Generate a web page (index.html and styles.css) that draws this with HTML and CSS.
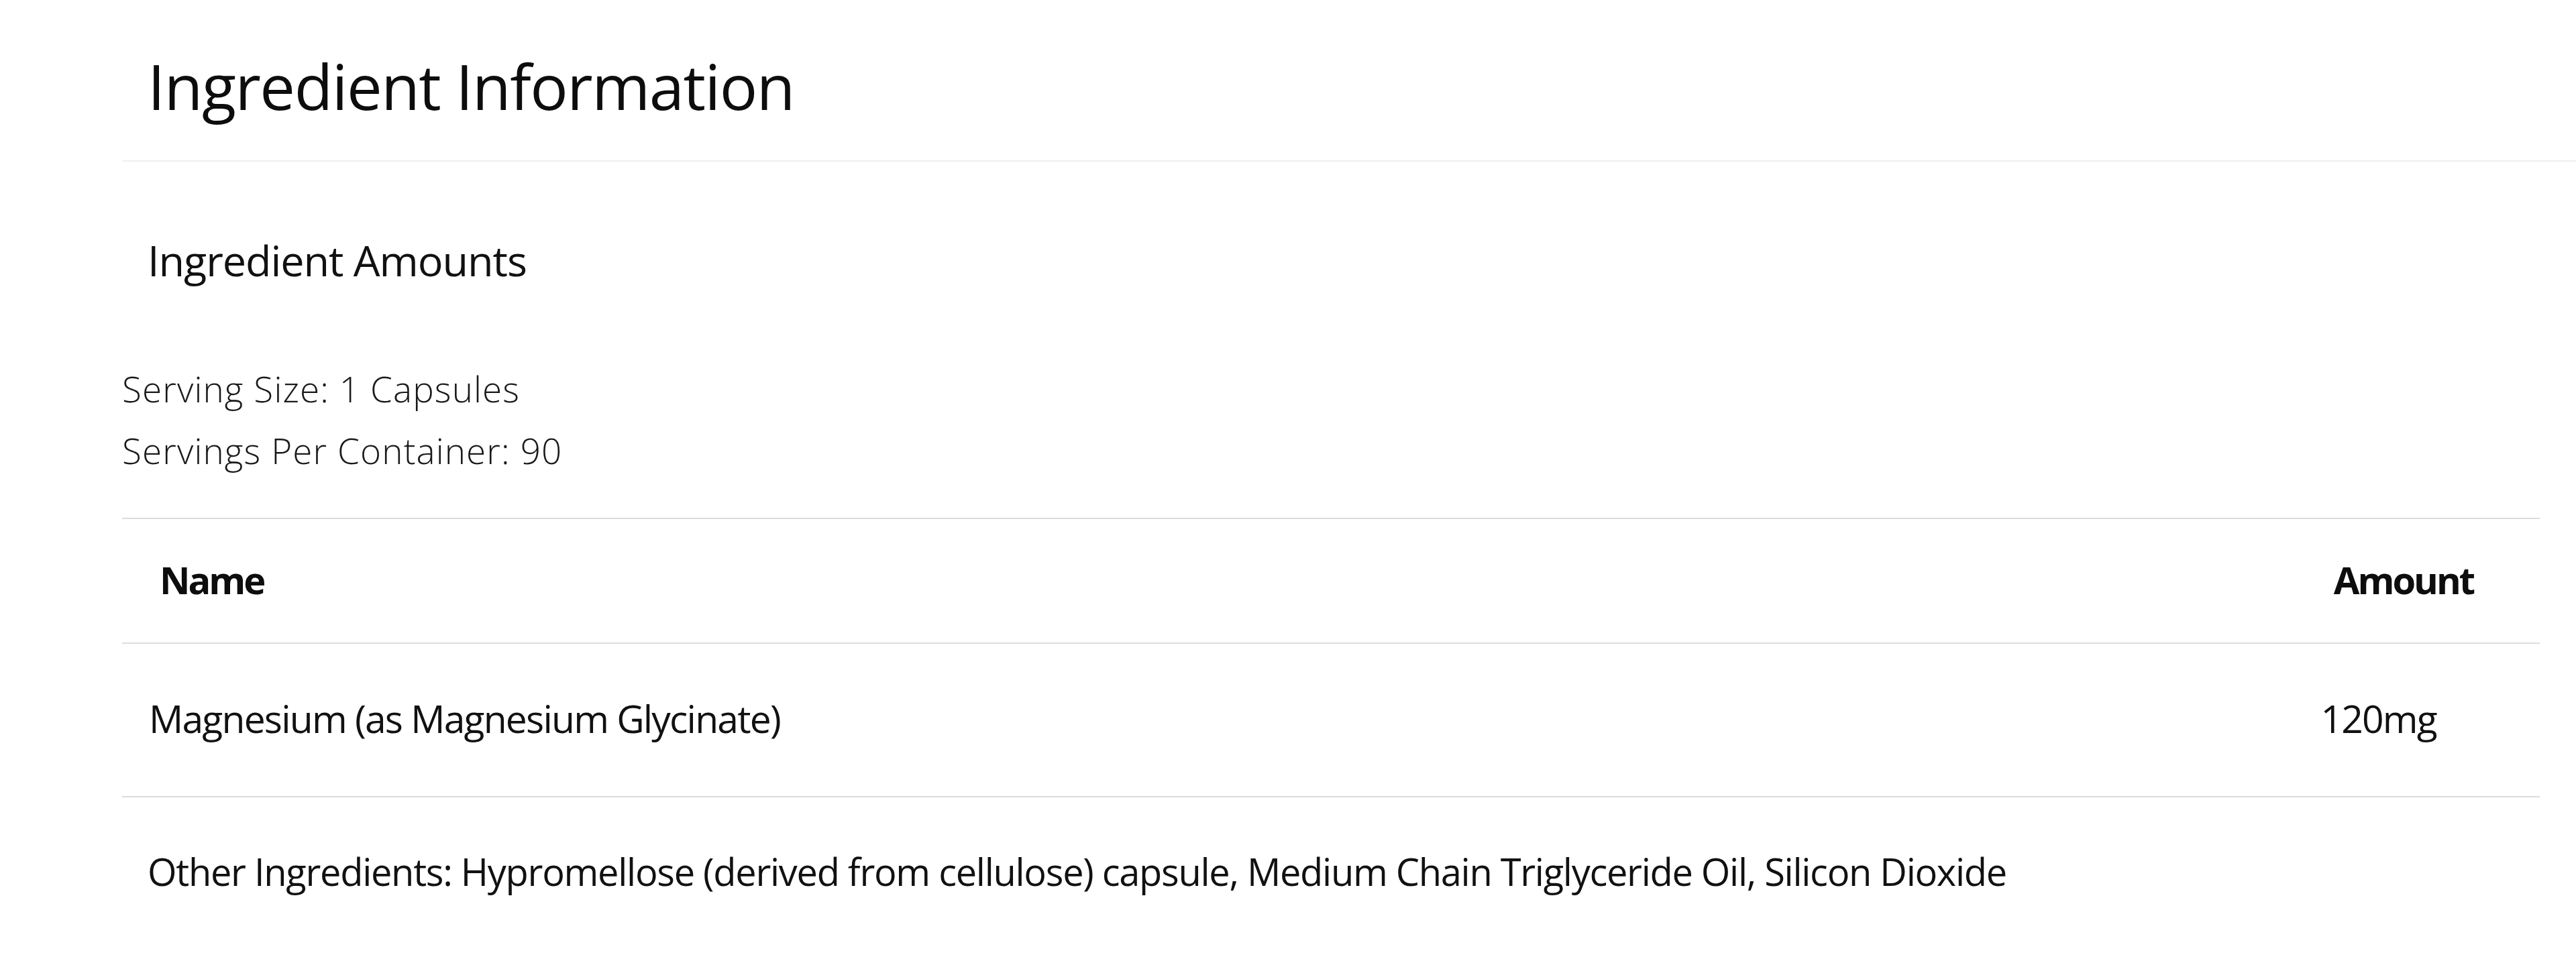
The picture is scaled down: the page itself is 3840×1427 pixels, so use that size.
FILE: index.html
```html
<!DOCTYPE html>
<html lang="en">
<head>
<meta charset="utf-8">
<title>Ingredient Information</title>
<link rel="stylesheet" href="styles.css">
</head>
<body>
<main class="page">
  <header class="title-section">
    <h1 class="title">Ingredient Information</h1>
  </header>
  <section class="amounts">
    <h2 class="subtitle">Ingredient Amounts</h2>
    <div class="serving">
      <p class="serving-line">Serving Size: 1 Capsules</p>
      <p class="serving-line">Servings Per Container: 90</p>
    </div>
    <div class="table">
      <div class="row head-row">
        <span class="cell head-name">Name</span>
        <span class="cell head-amount">Amount</span>
      </div>
      <div class="row body-row">
        <span class="cell body-name">Magnesium (as Magnesium Glycinate)</span>
        <span class="cell body-amount">120mg</span>
      </div>
    </div>
    <p class="other">Other Ingredients: Hypromellose (derived from cellulose) capsule, Medium Chain Triglyceride Oil, Silicon Dioxide</p>
  </section>
</main>
</body>
</html>
```
FILE: styles.css
```css
* { box-sizing: border-box; }
html, body { margin: 0; padding: 0; background: #ffffff; }
body {
  font-family: "Open Sans", "Noto Sans", sans-serif;
  color: #111111;
  overflow: hidden;
}
.page {
  padding: 58px 0 0 182px;
}
.title-section {
  border-bottom: 2px solid #efefef;
  padding: 0 0 41px 38px;
}
.title {
  margin: 0;
  font-size: 94px;
  font-weight: 400;
  line-height: 140px;
  letter-spacing: -1.5px;
  color: #0d0d0d;
}
.amounts {
  padding-right: 54px;
}
.subtitle {
  margin: 97px 0 0 38px;
  font-size: 63px;
  font-weight: 400;
  line-height: 100px;
  letter-spacing: -1.1px;
  color: #111111;
}
.serving {
  margin-top: 96px;
}
.serving-line {
  margin: 0;
  font-size: 53px;
  font-weight: 300;
  line-height: 92px;
  letter-spacing: 1.1px;
  color: #1a1a1a;
}
.table {
  margin-top: 54px;
  border-top: 2px solid #dcdcdc;
}
.row {
  display: flex;
  justify-content: space-between;
  border-bottom: 2px solid #dcdcdc;
}
.head-row {
  padding: 50px 99px 54px 56px;
}
.body-row {
  padding: 71px 154px 76px 40px;
}
.cell {
  line-height: 80px;
}
.head-name, .head-amount {
  font-size: 56px;
  font-weight: 700;
  letter-spacing: -3px;
  color: #0d0d0d;
}
.body-name, .body-amount {
  font-size: 57px;
  font-weight: 400;
  letter-spacing: -1.8px;
  color: #111111;
}
.other {
  margin: 70px 0 0 38px;
  font-size: 56px;
  font-weight: 400;
  line-height: 80px;
  letter-spacing: -1.3px;
  color: #111111;
}
```
